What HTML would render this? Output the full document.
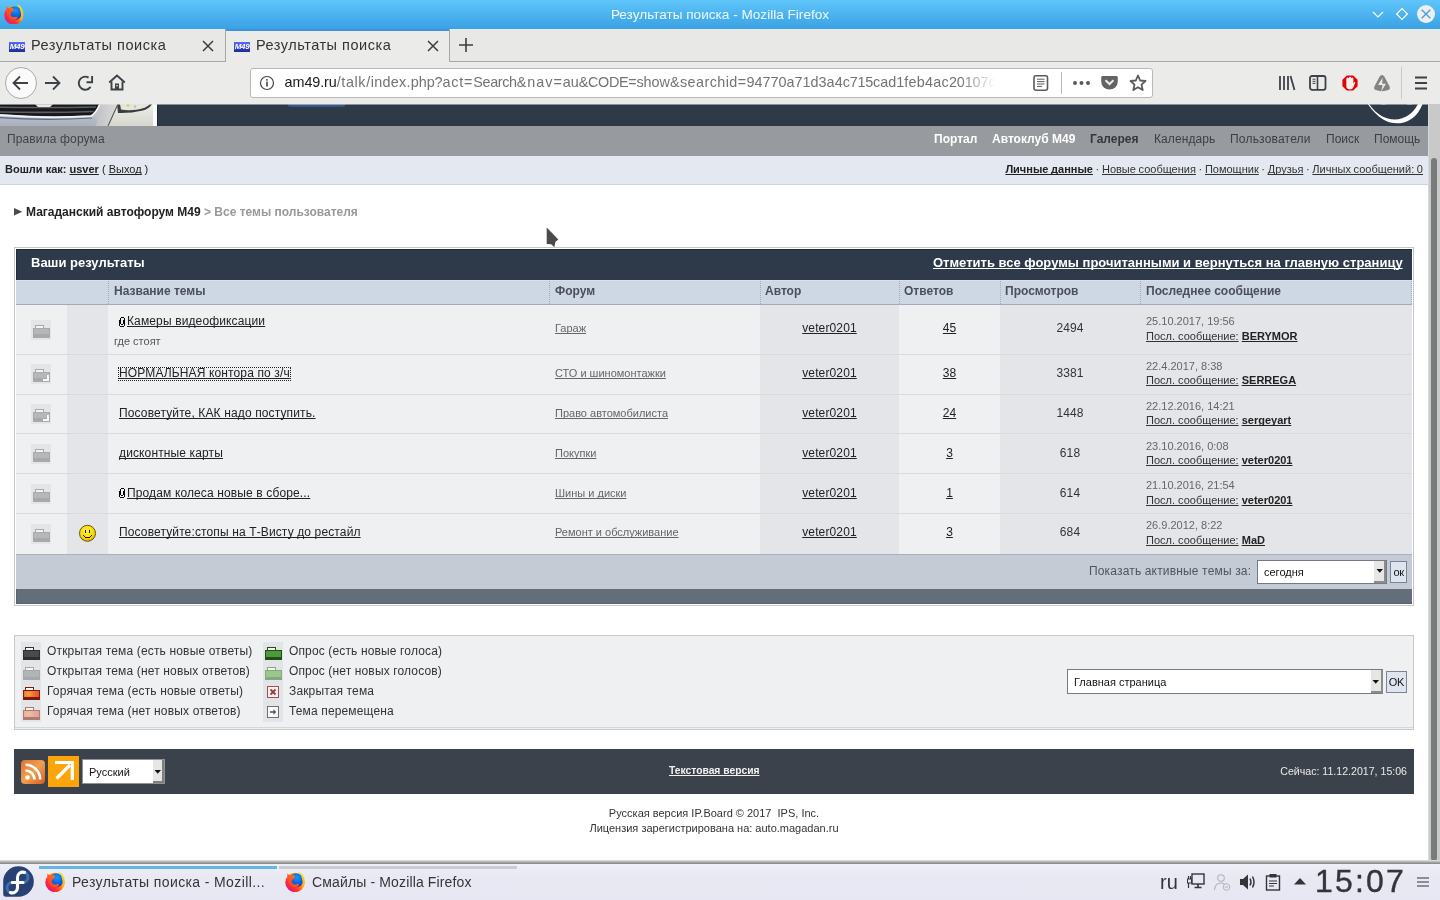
<!DOCTYPE html>
<html><head><meta charset="utf-8">
<style>
*{margin:0;padding:0;box-sizing:border-box}
html,body{width:1440px;height:900px;overflow:hidden;background:#fff;font-family:"Liberation Sans",sans-serif;position:relative}
.a{position:absolute}
.t{position:absolute;white-space:nowrap;line-height:14px}
#root{position:absolute;left:0;top:0;width:1440px;height:900px;will-change:transform}
a{color:inherit}
u{text-decoration:underline;text-decoration-skip-ink:none}
#title{left:0;top:0;width:1440px;height:29px;background:linear-gradient(#5fc5fa,#3aa1e4)}
#tabs{left:0;top:29px;width:1440px;height:33px;background:#e8e8e7;border-bottom:1px solid #a7a7a7}
#nav{left:0;top:62px;width:1440px;height:42px;background:#ebebea}
#scroll{left:1428px;top:104px;width:12px;height:756px;background:#c8c9c8;border-left:1px solid #d8d8d8}
#thumb{left:1431px;top:158px;width:6px;height:703px;background:#777b7b;border-radius:3px}
#taskbar{left:0;top:864px;width:1440px;height:36px;background:linear-gradient(#efeff7,#e9e9f4 30%,#e7e7f3)}
.fav{width:16px;height:10px;background:linear-gradient(#5a6cf0,#1c2a9c);color:#fff;font:italic bold 8px/10px "Liberation Sans",sans-serif;text-align:center;letter-spacing:-0.3px}
.ct{font-family:"Liberation Sans",sans-serif;color:#3b3f44}
</style></head><body><div id="root">
<!-- ===== TITLE BAR ===== -->
<div id="title" class="a"></div>
<div class="t" style="left:0;top:7px;width:1440px;text-align:center;color:#eef8fe;font-size:13.6px;line-height:16px">Результаты поиска - Mozilla Firefox</div>
<svg width="0" height="0" style="position:absolute"><defs>
    <linearGradient id="ffo" x1="0.1" y1="0.9" x2="0.9" y2="0.1"><stop offset="0" stop-color="#d41b8c"/><stop offset="0.3" stop-color="#ff2d2d"/><stop offset="0.62" stop-color="#ff8c0a"/><stop offset="1" stop-color="#ffe426"/></linearGradient>
    <radialGradient id="ffb" cx="0.55" cy="0.3" r="0.75"><stop offset="0" stop-color="#0a9bff"/><stop offset="0.6" stop-color="#0a5fe0"/><stop offset="1" stop-color="#3a1c9e"/></radialGradient>
    <linearGradient id="fft" x1="0" y1="0" x2="0.3" y2="1"><stop offset="0" stop-color="#ffe82a"/><stop offset="1" stop-color="#ffb30f"/></linearGradient>
    <linearGradient id="ffr" x1="0" y1="1" x2="1" y2="0"><stop offset="0" stop-color="#ff2a3a"/><stop offset="1" stop-color="#ff8a0a"/></linearGradient>
</defs></svg>
<svg class="a" style="left:4px;top:3.5px" width="19.5" height="20.5" viewBox="0 0 20 21">
  <circle cx="10" cy="11.5" r="9.7" fill="url(#ffo)"/>
  <circle cx="11.2" cy="9.3" r="7" fill="url(#ffb)"/>
  <path d="M13.3 0.3 Q20.2 3.5 19.8 11.5 Q19.5 16 16.5 18.5 Q18 13 17.6 10 Q17.2 5 13.3 0.3Z" fill="url(#fft)"/>
  <path d="M2.4 2.6 L4.4 4.3 Q7 3 9.6 4.6 L10 7.2 Q8.2 7.6 7.4 8.4 Q6.2 10.5 7.5 12.2 Q9 14 11.8 13.2 Q13.5 12.8 14.2 14 Q12.5 16.5 9.2 16.4 Q4.5 15.8 2.8 11 Q2 6 2.4 2.6Z" fill="url(#ffr)"/>
</svg>
<svg class="a" style="left:1370px;top:8px" width="16" height="12"><path d="M3 4 L8 9 L13 4" fill="none" stroke="#fff" stroke-width="1.2"/></svg>
<svg class="a" style="left:1395px;top:7px" width="14" height="14"><path d="M7 1.6 L12.4 7 L7 12.4 L1.6 7Z" fill="none" stroke="#fff" stroke-width="1.2"/></svg>
<svg class="a" style="left:1416px;top:4px" width="20" height="20"><circle cx="10" cy="10" r="9" fill="#eeeeee"/><path d="M5.7 5.7 L14.3 14.3 M14.3 5.7 L5.7 14.3" stroke="#3a9fe5" stroke-width="1.3"/></svg>

<!-- ===== TABS ===== -->
<div id="tabs" class="a"></div>
<div class="a" style="left:0;top:29px;width:226px;height:32px;border-right:1px solid #a7a7a7;background:#e8e8e7"></div>
<div class="a" style="left:226px;top:29px;width:223px;height:33px;background:#ebebea"></div>
<div class="a" style="left:226px;top:29px;width:223px;height:2px;background:#3e91de"></div>
<div class="a" style="left:449px;top:29px;width:1px;height:32px;background:#a7a7a7"></div>
<div class="a fav" style="left:9px;top:42px">M49</div>
<div class="t" style="left:31px;top:37px;font-size:14.5px;line-height:16px;color:#333;letter-spacing:0.52px">Результаты поиска</div>
<svg class="a" style="left:202px;top:40px" width="12" height="12"><path d="M1 1 L11 11 M11 1 L1 11" stroke="#3d3d3d" stroke-width="1.5"/></svg>
<div class="a fav" style="left:234px;top:42px">M49</div>
<div class="t" style="left:256px;top:37px;font-size:14.5px;line-height:16px;color:#333;letter-spacing:0.52px">Результаты поиска</div>
<svg class="a" style="left:427px;top:40px" width="12" height="12"><path d="M1 1 L11 11 M11 1 L1 11" stroke="#3d3d3d" stroke-width="1.5"/></svg>
<svg class="a" style="left:458px;top:37px" width="16" height="16"><path d="M8 1 V15 M1 8 H15" stroke="#3d3d3d" stroke-width="1.6"/></svg>

<!-- ===== NAV BAR ===== -->
<div id="nav" class="a"></div>
<div class="a" style="left:5px;top:67px;width:32px;height:32px;border-radius:50%;background:#fafafa;border:1px solid #a9a9a9"></div>
<svg class="a" style="left:11px;top:74px" width="20" height="18"><path d="M2.5 9 H17 M9 2.5 L2.5 9 L9 15.5" fill="none" stroke="#3d4247" stroke-width="1.8"/></svg>
<svg class="a" style="left:43px;top:74px" width="20" height="18"><path d="M2 9 H16.5 M10 2.5 L16.5 9 L10 15.5" fill="none" stroke="#3d4247" stroke-width="1.8"/></svg>
<svg class="a" style="left:76px;top:74px" width="19" height="18"><path d="M12.6 3.6 A 6.5 6.5 0 1 0 14.6 12.9" fill="none" stroke="#3d4247" stroke-width="1.9"/><path d="M16.1 2 V8.2 H10.5" fill="none" stroke="#3d4247" stroke-width="1.9"/></svg>
<svg class="a" style="left:108px;top:74px" width="18" height="18"><path d="M1.2 8.5 L9 1.5 L16.8 8.5" fill="none" stroke="#3d4247" stroke-width="1.9"/><path d="M3.5 7.5 V15.5 H14.5 V7.5" fill="none" stroke="#3d4247" stroke-width="1.9"/><rect x="7" y="9.5" width="4" height="6" fill="#3d4247"/><rect x="8.3" y="11" width="1.4" height="1.4" fill="#ebebea"/></svg>
<!-- url bar -->
<div class="a" style="left:250px;top:68px;width:903px;height:30px;background:#fff;border:1px solid #b8b8b8;border-radius:3px"></div>
<svg class="a" style="left:259px;top:75px" width="16" height="16"><circle cx="8" cy="8" r="6.5" fill="none" stroke="#454545" stroke-width="1.2"/><rect x="7.2" y="6.6" width="1.6" height="5" fill="#454545"/><rect x="7.2" y="4.1" width="1.6" height="1.6" fill="#454545"/></svg>
<div class="a" style="left:251px;top:69px;width:749px;height:28px;overflow:hidden"><span class="t" style="left:33.6px;top:5px;font-size:14.4px;line-height:17px;color:#1a1a1a;letter-spacing:-0.10px">am49.ru</span><span class="t" style="left:85.7px;top:5px;font-size:14.4px;line-height:17px;color:#737373;letter-spacing:0.62px">/talk/</span><span class="t" style="left:119.8px;top:5px;font-size:14.4px;line-height:17px;color:#737373;letter-spacing:0.27px">index.</span><span class="t" style="left:159.8px;top:5px;font-size:14.4px;line-height:17px;color:#737373;letter-spacing:-0.08px">php?</span><span class="t" style="left:191.5px;top:5px;font-size:14.4px;line-height:17px;color:#737373;letter-spacing:0.80px">act=</span><span class="t" style="left:222.3px;top:5px;font-size:14.4px;line-height:17px;color:#737373;letter-spacing:-0.37px">Search</span><span class="t" style="left:265.7px;top:5px;font-size:14.4px;line-height:17px;color:#737373;letter-spacing:0.98px">&amp;nav=</span><span class="t" style="left:311.8px;top:5px;font-size:14.4px;line-height:17px;color:#737373;letter-spacing:-0.06px">au</span><span class="t" style="left:327.7px;top:5px;font-size:14.4px;line-height:17px;color:#737373;letter-spacing:-0.32px">&amp;CODE=</span><span class="t" style="left:385.4px;top:5px;font-size:14.4px;line-height:17px;color:#737373;letter-spacing:-0.00px">show</span><span class="t" style="left:419.0px;top:5px;font-size:14.4px;line-height:17px;color:#737373;letter-spacing:0.41px">&amp;searchid=</span><span class="t" style="left:495.5px;top:5px;font-size:14.4px;line-height:17px;color:#737373;letter-spacing:-0.03px">94770</span><span class="t" style="left:535.4px;top:5px;font-size:14.4px;line-height:17px;color:#737373;letter-spacing:0.04px">a71d3a4</span><span class="t" style="left:591.7px;top:5px;font-size:14.4px;line-height:17px;color:#737373;letter-spacing:-0.20px">c715</span><span class="t" style="left:622.1px;top:5px;font-size:14.4px;line-height:17px;color:#737373;letter-spacing:-0.03px">cad1</span><span class="t" style="left:653.2px;top:5px;font-size:14.4px;line-height:17px;color:#737373;letter-spacing:0.25px">feb4ac</span><span class="t" style="left:697.9px;top:5px;font-size:14.4px;line-height:17px;color:#737373;letter-spacing:-0.13px">20107</span><span class="t" style="left:737.3px;top:5px;font-size:14.4px;line-height:17px;color:#737373;letter-spacing:0.25px">cd</span></div>
<div class="a" style="left:960px;top:70px;width:42px;height:26px;background:linear-gradient(90deg,rgba(255,255,255,0),#fff 85%)"></div>
<svg class="a" style="left:1033px;top:75px" width="16" height="16"><rect x="1" y="0.8" width="13.5" height="14.4" rx="1.6" fill="none" stroke="#5a5a5a" stroke-width="1.6"/><path d="M4 4.2 H11.5 M4 6.6 H11.5 M4 9 H11.5 M4 11.4 H9" stroke="#5a5a5a" stroke-width="1"/></svg>
<div class="a" style="left:1061px;top:72px;width:1px;height:22px;background:#b8b8b8"></div>
<svg class="a" style="left:1072px;top:78px" width="20" height="10"><circle cx="3" cy="5" r="2" fill="#5a5a5a"/><circle cx="9.5" cy="5" r="2" fill="#5a5a5a"/><circle cx="16" cy="5" r="2" fill="#5a5a5a"/></svg>
<svg class="a" style="left:1101px;top:75px" width="18" height="16"><path d="M1.5 1 H15.5 Q16.8 1 16.8 2.5 V6.5 A 8.3 8 0 0 1 0.2 6.5 V2.5 Q0.2 1 1.5 1Z" fill="#646464"/><path d="M4.5 5.2 L8.5 9 L12.5 5.2" fill="none" stroke="#ebebea" stroke-width="2"/></svg>
<svg class="a" style="left:1129px;top:74px" width="18" height="18"><path d="M9 1.5 L11.2 6.5 L16.5 7 L12.5 10.6 L13.7 16 L9 13.2 L4.3 16 L5.5 10.6 L1.5 7 L6.8 6.5Z" fill="none" stroke="#5a5a5a" stroke-width="1.8" stroke-linejoin="round"/></svg>
<!-- right icons -->
<svg class="a" style="left:1278px;top:75px" width="18" height="16"><path d="M2 1 V15 M6 1 V15 M10 1 V15 M12.5 1 L16.5 15" stroke="#3d4247" stroke-width="1.8"/></svg>
<svg class="a" style="left:1309px;top:75px" width="18" height="16"><rect x="1" y="1" width="15.5" height="13.8" rx="2" fill="none" stroke="#3d4247" stroke-width="1.8"/><path d="M8.5 1 V15" stroke="#3d4247" stroke-width="1.6"/><path d="M3.5 4.2 H6.5 M3.5 6.3 H6.5 M3.5 8.4 H6.5" stroke="#3d4247" stroke-width="1"/></svg>
<svg class="a" style="left:1342px;top:75px" width="16" height="16"><path d="M4.8 0.4 H11.2 L15.6 4.8 V11.2 L11.2 15.6 H4.8 L0.4 11.2 V4.8Z" fill="#e60000"/><path d="M4.3 9.5 V4.2 Q4.3 2.6 5.6 2.6 Q6.4 2.6 6.6 3.4 Q6.9 1.8 8 1.8 Q9.2 1.8 9.3 3 Q9.7 2.4 10.4 2.5 Q11.4 2.7 11.4 3.8 V8.5 L12.2 7.2 Q13 6.5 13.4 7.3 L11.2 12.8 Q10.2 14.4 7.8 14.4 Q4.3 14.2 4.3 11Z" fill="#f0f0f0"/></svg>
<svg class="a" style="left:1373px;top:74px" width="18" height="18"><path d="M9 1 Q10.4 1 11.3 2.6 L16.6 12.6 Q17.6 15.2 15.2 16 Q12 16.8 9.6 17.2 L9 16.4 L8.4 17.2 Q6 16.8 2.8 16 Q0.4 15.2 1.4 12.6 L6.7 2.6 Q7.6 1 9 1Z" fill="#838383"/><path d="M9.6 3.8 L5 11 H9.6 L8.2 17.5 L13 9.8 H9.2Z" fill="#ebebea"/></svg>
<div class="a" style="left:1401px;top:67px;width:1px;height:32px;background:#c9c9c9"></div>
<svg class="a" style="left:1414px;top:75px" width="14" height="16"><path d="M1 2.6 H13 M1 8 H13 M1 13.4 H13" stroke="#3d4247" stroke-width="2"/></svg>

<!-- ===== PAGE ===== -->
<div id="page"></div>
<!-- banner -->
<svg class="a" style="left:0;top:104px" width="158" height="22" viewBox="0 0 158 22">
  <defs>
    <linearGradient id="bmp" x1="0" y1="0" x2="0" y2="1"><stop offset="0" stop-color="#c6cbd4"/><stop offset="1" stop-color="#aab1be"/></linearGradient>
    <linearGradient id="bod" x1="0" y1="0" x2="0" y2="1"><stop offset="0" stop-color="#eeeeea"/><stop offset="1" stop-color="#d6d6ce"/></linearGradient>
    <linearGradient id="bod2" x1="0" y1="0" x2="1" y2="0"><stop offset="0" stop-color="#b9bcc4"/><stop offset="1" stop-color="#dcdcd6"/></linearGradient>
  </defs>
  <rect x="0" y="0" width="158" height="22" fill="url(#bmp)"/>
  <path d="M92 0 H118 L108 22 H95 Q100 14 92 12Z" fill="url(#bod2)"/>
  <path d="M118 0 H153 V22 H108Z" fill="url(#bod)"/>
  <path d="M0 0 H99 Q96 9 90 11.5 Q45 13.5 0 10Z" fill="#17181b"/>
  <path d="M0 3.2 Q50 4 96 3" stroke="#5c5f64" stroke-width="1.6" fill="none"/>
  <path d="M0 8 Q50 9 93.5 7.5" stroke="#5a5d62" stroke-width="1.6" fill="none"/>
  <path d="M0 11.2 Q45 14.8 91 12.2 Q96 9 99.5 1" stroke="#f2f3f5" stroke-width="1.8" fill="none"/>
  <path d="M0 13.6 Q45 17 92 14" stroke="#5d6a85" stroke-width="1.2" fill="none"/>
  <path d="M35 0.3 H53 L50 3 H38Z" fill="#e8e8e8"/>
  <path d="M117 0 H152 Q150 4 143 6.5 Q130 9.5 118 9Z" fill="#3a3e3a"/>
  <path d="M120 0 H150 Q147 3.5 138 5.5 Q128 6.8 121 5.5Z" fill="#e4e6dc"/>
  <circle cx="128" cy="1.2" r="1.3" fill="#e8c820"/>
  <circle cx="135" cy="2.5" r="1.2" fill="#b8c0b0"/>
  <path d="M118 0 L108 22" stroke="#55575a" stroke-width="1.1"/>
  <rect x="153" y="0" width="5" height="22" fill="#fbfbfb"/>
</svg>
<div class="a" style="left:157px;top:104px;width:1271px;height:22px;background:#2e3a48;border-top:1px solid #232d3c;border-left:1px solid #1e2736"></div>
<div class="a" style="left:288px;top:104px;width:57px;height:3px;background:#385684;border-radius:0 0 2px 2px"></div>
<svg class="a" style="left:1360px;top:104px" width="68" height="22" viewBox="0 0 68 22">
  <path d="M7.8 0 Q22 21 40 19.2 Q56 17 62.5 0 H58 Q50 15 35 15.5 Q20 15.5 9 0Z" fill="#fff"/>
  <rect x="21" y="0" width="5" height="1" fill="#6b7480"/><rect x="47" y="0" width="5" height="1" fill="#6b7480"/>
</svg>
<div class="a" style="left:0;top:104px;width:1428px;height:1px;background:rgba(228,228,225,0.55)"></div>
<!-- main nav bar -->
<div class="a" style="left:0;top:126px;width:1428px;height:30px;background:#979a9f"></div>
<div class="t" style="left:7px;top:132px;font-size:12px;color:#3f444b;letter-spacing:0.13px">Правила форума</div>
<div class="t" style="left:934px;top:132px;font-size:12px;font-weight:bold;color:#fff">Портал</div>
<div class="t" style="left:992px;top:132px;font-size:12px;font-weight:bold;color:#fff">Автоклуб М49</div>
<div class="t" style="left:1090px;top:132px;font-size:12px;font-weight:bold;color:#33383f">Галерея</div>
<div class="t" style="left:1154px;top:132px;font-size:12px;color:#3b4047;letter-spacing:0.1px">Календарь</div>
<div class="t" style="left:1230px;top:132px;font-size:12px;color:#3b4047;letter-spacing:0.2px">Пользователи</div>
<div class="t" style="left:1326px;top:132px;font-size:12px;color:#3b4047">Поиск</div>
<div class="t" style="left:1374px;top:132px;font-size:12px;color:#3b4047">Помощь</div>
<!-- user bar -->
<div class="a" style="left:0;top:156px;width:1428px;height:29px;background:#e4e8f0;border-bottom:1px solid #cfd5de"></div>
<div class="t" style="left:5px;top:162px;font-size:11px;color:#222"><b>Вошли как:</b> <b><u>usver</u></b> ( <u>Выход</u> )</div>
<div class="t" style="left:900px;width:523px;text-align:right;top:162px;font-size:11px;color:#333;word-spacing:-0.4px"><b><u style="color:#222">Личные данные</u></b> · <u>Новые сообщения</u> · <u>Помощник</u> · <u>Друзья</u> · <u>Личных сообщений: 0</u></div>
<!-- breadcrumb -->
<svg class="a" style="left:14px;top:207.5px" width="9" height="8"><path d="M0 0 L8.3 3.8 L0 7.6Z" fill="#4a4a4a"/></svg>
<div class="t" style="left:26px;top:205px;font-size:12px;font-weight:bold;color:#222">Магаданский автофорум М49 <span style="color:#999">&gt; Все темы пользователя</span></div>
<!-- mouse cursor -->
<svg class="a" style="left:544px;top:225px" width="17" height="25"><path d="M2.7 2.5 L2.7 19 L7.2 19.3 L10.4 22.2 L11.3 17 L14.3 14.6Z" fill="#4a4a4a" stroke="#fff" stroke-width="2" stroke-linejoin="round" paint-order="stroke"/></svg>

<!-- TABLE -->
<div class="a" style="left:14px;top:247px;width:1400px;height:359px;border:1px solid #c6c6c6;background:#fff"></div>
<div class="a" style="left:16px;top:249px;width:1396px;height:31px;background:#2e3a49;border-left:1px solid #1f2b3b;border-top:1px solid #1f2b3b"></div>
<div class="t" style="left:31px;top:255.5px;font-size:13px;font-weight:bold;color:#fff">Ваши результаты</div>
<div class="t" style="left:933px;top:255.5px;font-size:13px;font-weight:bold;color:#fff"><u>Отметить все форумы прочитанными и вернуться на главную страницу</u></div>
<div class="a" style="left:16px;top:280px;width:1396px;height:25px;background:#ced7e4;border-top:1px solid #d9e0ea;border-bottom:1px solid #a2abb8"></div>
<div class="a" style="left:108px;top:281px;width:1px;height:23px;border-left:1px dotted #a3acb9"></div>
<div class="a" style="left:549px;top:281px;width:1px;height:23px;border-left:1px dotted #a3acb9"></div>
<div class="a" style="left:760px;top:281px;width:1px;height:23px;border-left:1px dotted #a3acb9"></div>
<div class="a" style="left:899px;top:281px;width:1px;height:23px;border-left:1px dotted #a3acb9"></div>
<div class="a" style="left:1000px;top:281px;width:1px;height:23px;border-left:1px dotted #a3acb9"></div>
<div class="a" style="left:1140px;top:281px;width:1px;height:23px;border-left:1px dotted #a3acb9"></div>
<div class="a" style="left:1411px;top:281px;width:1px;height:23px;border-left:1px dotted #a3acb9"></div>
<div class="t" style="left:114px;top:284px;font-size:12px;font-weight:bold;color:#4a505a">Название темы</div>
<div class="t" style="left:555px;top:284px;font-size:12px;font-weight:bold;color:#4a505a">Форум</div>
<div class="t" style="left:765px;top:284px;font-size:12px;font-weight:bold;color:#4a505a">Автор</div>
<div class="t" style="left:904px;top:284px;font-size:12px;font-weight:bold;color:#4a505a">Ответов</div>
<div class="t" style="left:1005px;top:284px;font-size:12px;font-weight:bold;color:#4a505a">Просмотров</div>
<div class="t" style="left:1146px;top:284px;font-size:12px;font-weight:bold;color:#4a505a">Последнее сообщение</div>
<div class="a" style="left:16px;top:305px;width:51px;height:49px;background:#eff0f2"></div>
<div class="a" style="left:67px;top:305px;width:41px;height:49px;background:#e4e5e9"></div>
<div class="a" style="left:108px;top:305px;width:441px;height:49px;background:#eff0f2"></div>
<div class="a" style="left:549px;top:305px;width:211px;height:49px;background:#eff0f2"></div>
<div class="a" style="left:760px;top:305px;width:139px;height:49px;background:#e4e5e9"></div>
<div class="a" style="left:899px;top:305px;width:101px;height:49px;background:#eff0f2"></div>
<div class="a" style="left:1000px;top:305px;width:140px;height:49px;background:#e4e5e9"></div>
<div class="a" style="left:1140px;top:305px;width:272px;height:49px;background:#e4e5e9"></div>
<div class="a" style="left:16px;top:355px;width:51px;height:39px;background:#eff0f2"></div>
<div class="a" style="left:67px;top:355px;width:41px;height:39px;background:#e4e5e9"></div>
<div class="a" style="left:108px;top:355px;width:441px;height:39px;background:#eff0f2"></div>
<div class="a" style="left:549px;top:355px;width:211px;height:39px;background:#eff0f2"></div>
<div class="a" style="left:760px;top:355px;width:139px;height:39px;background:#e4e5e9"></div>
<div class="a" style="left:899px;top:355px;width:101px;height:39px;background:#eff0f2"></div>
<div class="a" style="left:1000px;top:355px;width:140px;height:39px;background:#e4e5e9"></div>
<div class="a" style="left:1140px;top:355px;width:272px;height:39px;background:#e4e5e9"></div>
<div class="a" style="left:16px;top:395px;width:51px;height:38px;background:#eff0f2"></div>
<div class="a" style="left:67px;top:395px;width:41px;height:38px;background:#e4e5e9"></div>
<div class="a" style="left:108px;top:395px;width:441px;height:38px;background:#eff0f2"></div>
<div class="a" style="left:549px;top:395px;width:211px;height:38px;background:#eff0f2"></div>
<div class="a" style="left:760px;top:395px;width:139px;height:38px;background:#e4e5e9"></div>
<div class="a" style="left:899px;top:395px;width:101px;height:38px;background:#eff0f2"></div>
<div class="a" style="left:1000px;top:395px;width:140px;height:38px;background:#e4e5e9"></div>
<div class="a" style="left:1140px;top:395px;width:272px;height:38px;background:#e4e5e9"></div>
<div class="a" style="left:16px;top:434px;width:51px;height:39px;background:#eff0f2"></div>
<div class="a" style="left:67px;top:434px;width:41px;height:39px;background:#e4e5e9"></div>
<div class="a" style="left:108px;top:434px;width:441px;height:39px;background:#eff0f2"></div>
<div class="a" style="left:549px;top:434px;width:211px;height:39px;background:#eff0f2"></div>
<div class="a" style="left:760px;top:434px;width:139px;height:39px;background:#e4e5e9"></div>
<div class="a" style="left:899px;top:434px;width:101px;height:39px;background:#eff0f2"></div>
<div class="a" style="left:1000px;top:434px;width:140px;height:39px;background:#e4e5e9"></div>
<div class="a" style="left:1140px;top:434px;width:272px;height:39px;background:#e4e5e9"></div>
<div class="a" style="left:16px;top:474px;width:51px;height:39px;background:#eff0f2"></div>
<div class="a" style="left:67px;top:474px;width:41px;height:39px;background:#e4e5e9"></div>
<div class="a" style="left:108px;top:474px;width:441px;height:39px;background:#eff0f2"></div>
<div class="a" style="left:549px;top:474px;width:211px;height:39px;background:#eff0f2"></div>
<div class="a" style="left:760px;top:474px;width:139px;height:39px;background:#e4e5e9"></div>
<div class="a" style="left:899px;top:474px;width:101px;height:39px;background:#eff0f2"></div>
<div class="a" style="left:1000px;top:474px;width:140px;height:39px;background:#e4e5e9"></div>
<div class="a" style="left:1140px;top:474px;width:272px;height:39px;background:#e4e5e9"></div>
<div class="a" style="left:16px;top:514px;width:51px;height:40px;background:#eff0f2"></div>
<div class="a" style="left:67px;top:514px;width:41px;height:40px;background:#e4e5e9"></div>
<div class="a" style="left:108px;top:514px;width:441px;height:40px;background:#eff0f2"></div>
<div class="a" style="left:549px;top:514px;width:211px;height:40px;background:#eff0f2"></div>
<div class="a" style="left:760px;top:514px;width:139px;height:40px;background:#e4e5e9"></div>
<div class="a" style="left:899px;top:514px;width:101px;height:40px;background:#eff0f2"></div>
<div class="a" style="left:1000px;top:514px;width:140px;height:40px;background:#e4e5e9"></div>
<div class="a" style="left:1140px;top:514px;width:272px;height:40px;background:#e4e5e9"></div>
<div class="a" style="left:16px;top:354px;width:1396px;height:1px;background:#d9dadc"></div>
<div class="a" style="left:16px;top:394px;width:1396px;height:1px;background:#d9dadc"></div>
<div class="a" style="left:16px;top:433px;width:1396px;height:1px;background:#d9dadc"></div>
<div class="a" style="left:16px;top:473px;width:1396px;height:1px;background:#d9dadc"></div>
<div class="a" style="left:16px;top:513px;width:1396px;height:1px;background:#d9dadc"></div>
<div class="a" style="left:16px;top:554px;width:1396px;height:1px;background:#a9b1bd"></div>
<div class="a" style="left:16px;top:555px;width:1396px;height:34px;background:#c4cbd4"></div>
<div class="a" style="left:16px;top:589px;width:1396px;height:15px;background:#646e7b;border-bottom:1px solid #59636f;border-left:1px solid #59636f"></div>
<div class="t" style="left:1089px;top:564px;font-size:12px;color:#4e5560;letter-spacing:0.16px">Показать активные темы за:</div>
<div class="a" style="left:1257px;top:560px;width:130px;height:24px;background:#fff;border:1px solid #737b88"></div>
<div class="t" style="left:1264px;top:565px;font-size:11px;color:#111">сегодня</div>
<div class="a" style="left:1374px;top:561px;width:12px;height:22px;background:#e6e6e4;border-right:2px solid #8c8c8c;border-bottom:2px solid #8c8c8c"></div>
<svg class="a" style="left:1376px;top:568px" width="8" height="6"><path d="M0.5 1 H7 L3.75 4.8Z" fill="#111"/></svg>
<div class="a" style="left:1390px;top:561px;width:17px;height:22px;background:#dfe5ef;border:1px solid #7c8594"></div>
<div class="t" style="left:1391px;top:565px;width:15px;text-align:center;font-size:11px;color:#111;letter-spacing:-0.5px">ок</div>
<div class="a" style="left:31px;top:320px;width:20px;height:20px;background:#e4e5e8"></div><div class="a" style="left:35px;top:325px;width:9px;height:4px;border:1px solid #a8a8a9;background:#f4f4f4"></div><div class="a" style="left:33px;top:328px;width:17px;height:10px;border:1px solid #a9a9aa;background:linear-gradient(#b6b7b9 0,#b6b7b9 65%,#a8a9ab 65%)"></div>
<svg class="a" style="left:118px;top:316px" width="8" height="12" shape-rendering="crispEdges" fill="#000"><rect x="3" y="1" width="1" height="1"/><rect x="4" y="1" width="1" height="1"/><rect x="5" y="1" width="1" height="1"/><rect x="2" y="2" width="1" height="1"/><rect x="6" y="2" width="1" height="1"/><rect x="2" y="3" width="1" height="1"/><rect x="6" y="3" width="1" height="1"/><rect x="1" y="4" width="1" height="1"/><rect x="2" y="4" width="1" height="1"/><rect x="5" y="4" width="1" height="1"/><rect x="6" y="4" width="1" height="1"/><rect x="1" y="5" width="1" height="1"/><rect x="2" y="5" width="1" height="1"/><rect x="5" y="5" width="1" height="1"/><rect x="6" y="5" width="1" height="1"/><rect x="1" y="6" width="1" height="1"/><rect x="2" y="6" width="1" height="1"/><rect x="5" y="6" width="1" height="1"/><rect x="6" y="6" width="1" height="1"/><rect x="1" y="7" width="1" height="1"/><rect x="2" y="7" width="1" height="1"/><rect x="5" y="7" width="1" height="1"/><rect x="6" y="7" width="1" height="1"/><rect x="1" y="8" width="1" height="1"/><rect x="3" y="8" width="1" height="1"/><rect x="4" y="8" width="1" height="1"/><rect x="6" y="8" width="1" height="1"/><rect x="1" y="9" width="1" height="1"/><rect x="6" y="9" width="1" height="1"/><rect x="2" y="10" width="1" height="1"/><rect x="3" y="10" width="1" height="1"/><rect x="4" y="10" width="1" height="1"/><rect x="5" y="10" width="1" height="1"/></svg>
<div class="t" style="left:127px;top:314px;font-size:12px;color:#222;letter-spacing:0.13px"><u>Камеры видеофиксации</u></div>
<div class="t" style="left:114px;top:334px;font-size:11px;color:#555">где стоят</div>
<div class="t" style="left:555px;top:321px;font-size:11px;color:#666"><u>Гараж</u></div>
<div class="t" style="left:760px;top:321px;width:139px;text-align:center;font-size:12px;color:#222;letter-spacing:0.13px"><u>veter0201</u></div>
<div class="t" style="left:899px;top:321px;width:101px;text-align:center;font-size:12px;color:#222"><u>45</u></div>
<div class="t" style="left:1000px;top:321px;width:140px;text-align:center;font-size:12px;color:#333;letter-spacing:0.13px">2494</div>
<div class="t" style="left:1146px;top:314px;font-size:11px;color:#666">25.10.2017, 19:56</div>
<div class="t" style="left:1146px;top:329px;font-size:11px;color:#333"><u>Посл. сообщение:</u> <b style="color:#222"><u>BERYMOR</u></b></div>
<div class="a" style="left:31px;top:364px;width:20px;height:20px;background:#e4e5e8"></div><div class="a" style="left:35px;top:369px;width:9px;height:4px;border:1px solid #a8a8a9;background:#f4f4f4"></div><div class="a" style="left:33px;top:372px;width:17px;height:10px;border:1px solid #a9a9aa;background:linear-gradient(#b6b7b9 0,#b6b7b9 65%,#a8a9ab 65%)"></div><div class="a" style="left:43px;top:375px;width:6px;height:6px;border-right:2px solid #f6f6f6;border-bottom:2px solid #f6f6f6"></div>
<div class="a" style="left:118px;top:367px;width:173px;height:14px;border:1px dotted #222"></div>
<div class="t" style="left:119px;top:366px;font-size:12px;color:#222;letter-spacing:0.13px"><u>НОРМАЛЬНАЯ контора по з/ч</u></div>
<div class="t" style="left:555px;top:366px;font-size:11px;color:#666"><u>СТО и шиномонтажки</u></div>
<div class="t" style="left:760px;top:366px;width:139px;text-align:center;font-size:12px;color:#222;letter-spacing:0.13px"><u>veter0201</u></div>
<div class="t" style="left:899px;top:366px;width:101px;text-align:center;font-size:12px;color:#222"><u>38</u></div>
<div class="t" style="left:1000px;top:366px;width:140px;text-align:center;font-size:12px;color:#333;letter-spacing:0.13px">3381</div>
<div class="t" style="left:1146px;top:359px;font-size:11px;color:#666">22.4.2017, 8:38</div>
<div class="t" style="left:1146px;top:373px;font-size:11px;color:#333"><u>Посл. сообщение:</u> <b style="color:#222"><u>SERREGA</u></b></div>
<div class="a" style="left:31px;top:404px;width:20px;height:20px;background:#e4e5e8"></div><div class="a" style="left:35px;top:409px;width:9px;height:4px;border:1px solid #a8a8a9;background:#f4f4f4"></div><div class="a" style="left:33px;top:412px;width:17px;height:10px;border:1px solid #a9a9aa;background:linear-gradient(#b6b7b9 0,#b6b7b9 65%,#a8a9ab 65%)"></div><div class="a" style="left:43px;top:415px;width:6px;height:6px;border-right:2px solid #f6f6f6;border-bottom:2px solid #f6f6f6"></div>
<div class="t" style="left:119px;top:406px;font-size:12px;color:#222;letter-spacing:0.13px"><u>Посоветуйте, КАК надо поступить.</u></div>
<div class="t" style="left:555px;top:406px;font-size:11px;color:#666"><u>Право автомобилиста</u></div>
<div class="t" style="left:760px;top:406px;width:139px;text-align:center;font-size:12px;color:#222;letter-spacing:0.13px"><u>veter0201</u></div>
<div class="t" style="left:899px;top:406px;width:101px;text-align:center;font-size:12px;color:#222"><u>24</u></div>
<div class="t" style="left:1000px;top:406px;width:140px;text-align:center;font-size:12px;color:#333;letter-spacing:0.13px">1448</div>
<div class="t" style="left:1146px;top:399px;font-size:11px;color:#666">22.12.2016, 14:21</div>
<div class="t" style="left:1146px;top:413px;font-size:11px;color:#333"><u>Посл. сообщение:</u> <b style="color:#222"><u>sergeyart</u></b></div>
<div class="a" style="left:31px;top:444px;width:20px;height:20px;background:#e4e5e8"></div><div class="a" style="left:35px;top:449px;width:9px;height:4px;border:1px solid #a8a8a9;background:#f4f4f4"></div><div class="a" style="left:33px;top:452px;width:17px;height:10px;border:1px solid #a9a9aa;background:linear-gradient(#b6b7b9 0,#b6b7b9 65%,#a8a9ab 65%)"></div>
<div class="t" style="left:119px;top:446px;font-size:12px;color:#222;letter-spacing:0.13px"><u>дисконтные карты</u></div>
<div class="t" style="left:555px;top:446px;font-size:11px;color:#666"><u>Покупки</u></div>
<div class="t" style="left:760px;top:446px;width:139px;text-align:center;font-size:12px;color:#222;letter-spacing:0.13px"><u>veter0201</u></div>
<div class="t" style="left:899px;top:446px;width:101px;text-align:center;font-size:12px;color:#222"><u>3</u></div>
<div class="t" style="left:1000px;top:446px;width:140px;text-align:center;font-size:12px;color:#333;letter-spacing:0.13px">618</div>
<div class="t" style="left:1146px;top:439px;font-size:11px;color:#666">23.10.2016, 0:08</div>
<div class="t" style="left:1146px;top:453px;font-size:11px;color:#333"><u>Посл. сообщение:</u> <b style="color:#222"><u>veter0201</u></b></div>
<div class="a" style="left:31px;top:484px;width:20px;height:20px;background:#e4e5e8"></div><div class="a" style="left:35px;top:489px;width:9px;height:4px;border:1px solid #a8a8a9;background:#f4f4f4"></div><div class="a" style="left:33px;top:492px;width:17px;height:10px;border:1px solid #a9a9aa;background:linear-gradient(#b6b7b9 0,#b6b7b9 65%,#a8a9ab 65%)"></div>
<svg class="a" style="left:118px;top:487px" width="8" height="12" shape-rendering="crispEdges" fill="#000"><rect x="3" y="1" width="1" height="1"/><rect x="4" y="1" width="1" height="1"/><rect x="5" y="1" width="1" height="1"/><rect x="2" y="2" width="1" height="1"/><rect x="6" y="2" width="1" height="1"/><rect x="2" y="3" width="1" height="1"/><rect x="6" y="3" width="1" height="1"/><rect x="1" y="4" width="1" height="1"/><rect x="2" y="4" width="1" height="1"/><rect x="5" y="4" width="1" height="1"/><rect x="6" y="4" width="1" height="1"/><rect x="1" y="5" width="1" height="1"/><rect x="2" y="5" width="1" height="1"/><rect x="5" y="5" width="1" height="1"/><rect x="6" y="5" width="1" height="1"/><rect x="1" y="6" width="1" height="1"/><rect x="2" y="6" width="1" height="1"/><rect x="5" y="6" width="1" height="1"/><rect x="6" y="6" width="1" height="1"/><rect x="1" y="7" width="1" height="1"/><rect x="2" y="7" width="1" height="1"/><rect x="5" y="7" width="1" height="1"/><rect x="6" y="7" width="1" height="1"/><rect x="1" y="8" width="1" height="1"/><rect x="3" y="8" width="1" height="1"/><rect x="4" y="8" width="1" height="1"/><rect x="6" y="8" width="1" height="1"/><rect x="1" y="9" width="1" height="1"/><rect x="6" y="9" width="1" height="1"/><rect x="2" y="10" width="1" height="1"/><rect x="3" y="10" width="1" height="1"/><rect x="4" y="10" width="1" height="1"/><rect x="5" y="10" width="1" height="1"/></svg>
<div class="t" style="left:127px;top:486px;font-size:12px;color:#222;letter-spacing:0.13px"><u>Продам колеса новые в сборе...</u></div>
<div class="t" style="left:555px;top:486px;font-size:11px;color:#666"><u>Шины и диски</u></div>
<div class="t" style="left:760px;top:486px;width:139px;text-align:center;font-size:12px;color:#222;letter-spacing:0.13px"><u>veter0201</u></div>
<div class="t" style="left:899px;top:486px;width:101px;text-align:center;font-size:12px;color:#222"><u>1</u></div>
<div class="t" style="left:1000px;top:486px;width:140px;text-align:center;font-size:12px;color:#333;letter-spacing:0.13px">614</div>
<div class="t" style="left:1146px;top:478px;font-size:11px;color:#666">21.10.2016, 21:54</div>
<div class="t" style="left:1146px;top:493px;font-size:11px;color:#333"><u>Посл. сообщение:</u> <b style="color:#222"><u>veter0201</u></b></div>
<div class="a" style="left:31px;top:524px;width:20px;height:20px;background:#e4e5e8"></div><div class="a" style="left:35px;top:529px;width:9px;height:4px;border:1px solid #a8a8a9;background:#f4f4f4"></div><div class="a" style="left:33px;top:532px;width:17px;height:10px;border:1px solid #a9a9aa;background:linear-gradient(#b6b7b9 0,#b6b7b9 65%,#a8a9ab 65%)"></div>
<svg class="a" style="left:78px;top:524px" width="19" height="19"><defs><radialGradient id="sm" cx="0.45" cy="0.35" r="0.7"><stop offset="0" stop-color="#fff04a"/><stop offset="0.65" stop-color="#f8d800"/><stop offset="1" stop-color="#e0a800"/></radialGradient></defs><circle cx="9.5" cy="9.3" r="8" fill="url(#sm)" stroke="#5c4500" stroke-width="0.9"/><g fill="#2a2000" shape-rendering="crispEdges"><rect x="7" y="6" width="1" height="3"/><rect x="11" y="6" width="1" height="3"/><rect x="5" y="11" width="1" height="1"/><rect x="6" y="12" width="1" height="1"/><rect x="7" y="13" width="5" height="1"/><rect x="12" y="12" width="1" height="1"/><rect x="13" y="11" width="1" height="1"/></g></svg>
<div class="t" style="left:119px;top:525px;font-size:12px;color:#222;letter-spacing:0.13px"><u>Посоветуйте:стопы на Т-Висту до рестайл</u></div>
<div class="t" style="left:555px;top:525px;font-size:11px;color:#666"><u>Ремонт и обслуживание</u></div>
<div class="t" style="left:760px;top:525px;width:139px;text-align:center;font-size:12px;color:#222;letter-spacing:0.13px"><u>veter0201</u></div>
<div class="t" style="left:899px;top:525px;width:101px;text-align:center;font-size:12px;color:#222"><u>3</u></div>
<div class="t" style="left:1000px;top:525px;width:140px;text-align:center;font-size:12px;color:#333;letter-spacing:0.13px">684</div>
<div class="t" style="left:1146px;top:518px;font-size:11px;color:#666">26.9.2012, 8:22</div>
<div class="t" style="left:1146px;top:533px;font-size:11px;color:#333"><u>Посл. сообщение:</u> <b style="color:#222"><u>MaD</u></b></div>
<!-- /TABLE -->
<!-- FOOT -->
<div class="a" style="left:14px;top:635px;width:1400px;height:95px;border:1px solid #c8c8c8;background:#eff0f2"></div>
<div class="a" style="left:15px;top:727px;width:1398px;height:1px;background:#d6d7d9"></div>
<div class="a" style="left:21px;top:642px;width:20px;height:80px;background:#e3e4e7"></div>
<div class="a" style="left:263px;top:642px;width:20px;height:80px;background:#e3e4e7"></div>
<div class="a" style="left:25px;top:647px;width:9px;height:4px;border:1px solid #333;background:#f5f5f5"></div><div class="a" style="left:23px;top:650px;width:17px;height:10px;border:1px solid #2e2e2e;background:linear-gradient(#4a4a4a 0,#4a4a4a 70%,#2e2e2e 70%)"></div>
<div class="a" style="left:25px;top:667px;width:9px;height:4px;border:1px solid #a8a8a8;background:#f5f5f5"></div><div class="a" style="left:23px;top:670px;width:17px;height:10px;border:1px solid #a6a7a9;background:linear-gradient(#b3b4b6 0,#b3b4b6 70%,#a6a7a9 70%)"></div>
<div class="a" style="left:25px;top:687px;width:9px;height:4px;border:1px solid #7a1a10;background:#f5f5f5"></div><div class="a" style="left:23px;top:690px;width:17px;height:10px;border:1px solid #7a1a10;background:linear-gradient(#e4572a 0,#e4572a 70%,#7a1a10 70%)"></div>
<div class="a" style="left:24px;top:691px;width:15px;height:6px;background:radial-gradient(circle at 30% 50%,#f7a040 0,#ea6a2a 60%,#e05a24 100%)"></div>
<div class="a" style="left:25px;top:707px;width:9px;height:4px;border:1px solid #b07a74;background:#f5f5f5"></div><div class="a" style="left:23px;top:710px;width:17px;height:10px;border:1px solid #b07a74;background:linear-gradient(#e6a79a 0,#e6a79a 70%,#b07a74 70%)"></div>
<div class="a" style="left:24px;top:711px;width:15px;height:6px;background:radial-gradient(circle at 30% 50%,#f0c0a4 0,#e6aa98 60%,#e2a294 100%)"></div>
<div class="a" style="left:267px;top:647px;width:9px;height:4px;border:1px solid #1f4e17;background:#f5f5f5"></div><div class="a" style="left:265px;top:650px;width:17px;height:10px;border:1px solid #1f4e17;background:linear-gradient(#4c9a3a 0,#4c9a3a 70%,#1f4e17 70%)"></div>
<div class="a" style="left:267px;top:667px;width:9px;height:4px;border:1px solid #86a97c;background:#f5f5f5"></div><div class="a" style="left:265px;top:670px;width:17px;height:10px;border:1px solid #86a97c;background:linear-gradient(#9cc68e 0,#9cc68e 70%,#86a97c 70%)"></div>
<svg class="a" style="left:267px;top:686px" width="12" height="12"><rect x="0.5" y="0.5" width="11" height="11" fill="#f7f0f0" stroke="#a05050"/><path d="M3.5 3.5 L8.5 8.5 M8.5 3.5 L3.5 8.5" stroke="#a03a3a" stroke-width="1.8"/></svg>
<svg class="a" style="left:267px;top:706px" width="12" height="12"><rect x="0.5" y="0.5" width="11" height="11" fill="#fafafa" stroke="#707070"/><path d="M3 6 H7.5" stroke="#555" stroke-width="1.6"/><path d="M6.5 3.3 L9.2 6 L6.5 8.7Z" fill="#555"/></svg>
<div class="t" style="left:47px;top:644px;font-size:12px;color:#333;letter-spacing:0.16px">Открытая тема (есть новые ответы)</div>
<div class="t" style="left:289px;top:644px;font-size:12px;color:#333;letter-spacing:0.14px">Опрос (есть новые голоса)</div>
<div class="t" style="left:47px;top:664px;font-size:12px;color:#333;letter-spacing:0.16px">Открытая тема (нет новых ответов)</div>
<div class="t" style="left:289px;top:664px;font-size:12px;color:#333;letter-spacing:0.14px">Опрос (нет новых голосов)</div>
<div class="t" style="left:47px;top:684px;font-size:12px;color:#333;letter-spacing:0.16px">Горячая тема (есть новые ответы)</div>
<div class="t" style="left:289px;top:684px;font-size:12px;color:#333;letter-spacing:0.14px">Закрытая тема</div>
<div class="t" style="left:47px;top:704px;font-size:12px;color:#333;letter-spacing:0.16px">Горячая тема (нет новых ответов)</div>
<div class="t" style="left:289px;top:704px;font-size:12px;color:#333;letter-spacing:0.14px">Тема перемещена</div>
<div class="a" style="left:1067px;top:669px;width:316px;height:25px;background:#fff;border:1px solid #737b88"></div>
<div class="t" style="left:1074px;top:675px;font-size:11px;color:#111">Главная страница</div>
<div class="a" style="left:1371px;top:670px;width:12px;height:23px;background:#e6e6e4;border-right:2px solid #8c8c8c;border-bottom:2px solid #8c8c8c"></div>
<svg class="a" style="left:1372px;top:679px" width="8" height="6"><path d="M0.5 1 H7 L3.75 4.8Z" fill="#111"/></svg>
<div class="a" style="left:1386px;top:671px;width:21px;height:22px;background:#dfe5ef;border:1px solid #7c8594"></div>
<div class="t" style="left:1386px;top:675px;width:21px;text-align:center;font-size:11px;color:#111;letter-spacing:-0.3px">OK</div>
<div class="a" style="left:14px;top:749px;width:1400px;height:45px;background:#3c424c"></div>
<svg class="a" style="left:21px;top:760px" width="24" height="24"><defs><linearGradient id="rss" x1="0" y1="0" x2="1" y2="1"><stop offset="0" stop-color="#e2712c"/><stop offset="0.5" stop-color="#f0a050"/><stop offset="1" stop-color="#d65c20"/></linearGradient></defs><rect x="0" y="0" width="24" height="24" rx="4" fill="url(#rss)"/><circle cx="6.5" cy="17.5" r="2.3" fill="#fff"/><path d="M4.5 10.5 A 9 9 0 0 1 13.5 19.5" fill="none" stroke="#fff" stroke-width="2.6"/><path d="M4.5 4.8 A 14.7 14.7 0 0 1 19.2 19.5" fill="none" stroke="#fff" stroke-width="2.6"/></svg>
<svg class="a" style="left:48px;top:756px" width="31" height="31"><rect x="0" y="0" width="31" height="31" fill="#fca50a"/><path d="M8.5 22.5 L22 9" stroke="#fff" stroke-width="3.2"/><path d="M7 6.5 H24.3 V24" fill="none" stroke="#fff" stroke-width="3.2"/></svg>
<div class="a" style="left:82px;top:759px;width:83px;height:25px;background:#fff;border:1px solid #8d939b"></div>
<div class="t" style="left:89px;top:765px;font-size:11px;color:#111">Русский</div>
<div class="a" style="left:153px;top:760px;width:11px;height:23px;background:#e6e6e4;border-right:2px solid #7f7f7f;border-bottom:2px solid #7f7f7f"></div>
<svg class="a" style="left:154px;top:769px" width="8" height="6"><path d="M0.5 1 H7 L3.75 4.8Z" fill="#111"/></svg>
<div class="t" style="left:669px;top:763.5px;font-size:10.3px;font-weight:bold;color:#f2f2f2"><u>Текстовая версия</u></div>
<div class="t" style="left:1000px;top:763.5px;width:407px;text-align:right;font-size:10.6px;color:#e8e8e8">Сейчас: 11.12.2017, 15:06</div>
<div class="t" style="left:14px;top:806px;width:1400px;text-align:center;font-size:11px;color:#333">Русская версия IP.Board &copy; 2017&nbsp; IPS, Inc.</div>
<div class="t" style="left:14px;top:821px;width:1400px;text-align:center;font-size:11px;color:#333">Лицензия зарегистрирована на: auto.magadan.ru</div>
<!-- /FOOT -->
<!-- ===== SCROLLBAR ===== -->
<div id="scroll" class="a"></div>
<div id="thumb" class="a"></div>

<!-- ===== TASKBAR ===== -->
<div class="a" style="left:0;top:860px;width:1440px;height:4px;background:linear-gradient(#e8e8e8,#b4b4b4 45%,#8c8c8c 85%,#9a9a9a)"></div>
<div id="taskbar" class="a"></div>
<svg class="a" style="left:0;top:862px" width="38" height="38" viewBox="0 0 38 38">
  <path d="M3.2 19.5 A 15.3 15.3 0 1 1 18.5 34.8 H6 Q3.2 34.8 3.2 32Z" fill="#294172"/>
  <path d="M22.7 10.1 A 5.2 5.2 0 0 1 22.7 20.5" fill="none" stroke="#3c6eb4" stroke-width="3"/>
  <path d="M12.3 20.5 A 5.2 5.2 0 0 0 12.3 30.9" fill="none" stroke="#3c6eb4" stroke-width="3"/>
  <path d="M24.6 10.5 A 5.2 5.2 0 0 0 17.5 15.3 V25.7 A 5.2 5.2 0 0 1 10.4 30.5" fill="none" stroke="#fff" stroke-width="3.1" stroke-linecap="round"/>
  <path d="M12.3 20.5 H23" stroke="#fff" stroke-width="3.1" stroke-linecap="round"/>
</svg>
<div class="a" style="left:39px;top:866px;width:238px;height:3px;background:#64b5e8"></div>
<div class="a" style="left:279px;top:866px;width:238px;height:3px;background:#c8ccd3"></div>
<svg class="a" style="left:45px;top:871px" width="20" height="21" viewBox="0 0 20 21">
  <circle cx="10" cy="11.5" r="9.7" fill="url(#ffo)"/>
  <circle cx="11.2" cy="9.3" r="7" fill="url(#ffb)"/>
  <path d="M13.3 0.3 Q20.2 3.5 19.8 11.5 Q19.5 16 16.5 18.5 Q18 13 17.6 10 Q17.2 5 13.3 0.3Z" fill="url(#fft)"/>
  <path d="M2.4 2.6 L4.4 4.3 Q7 3 9.6 4.6 L10 7.2 Q8.2 7.6 7.4 8.4 Q6.2 10.5 7.5 12.2 Q9 14 11.8 13.2 Q13.5 12.8 14.2 14 Q12.5 16.5 9.2 16.4 Q4.5 15.8 2.8 11 Q2 6 2.4 2.6Z" fill="url(#ffr)"/>
</svg>
<div class="t" style="left:72px;top:875px;font-size:14px;line-height:15px;color:#31363b;letter-spacing:0.38px">Результаты поиска - Mozill...</div>
<svg class="a" style="left:285px;top:871px" width="20" height="21" viewBox="0 0 20 21">
  <circle cx="10" cy="11.5" r="9.7" fill="url(#ffo)"/>
  <circle cx="11.2" cy="9.3" r="7" fill="url(#ffb)"/>
  <path d="M13.3 0.3 Q20.2 3.5 19.8 11.5 Q19.5 16 16.5 18.5 Q18 13 17.6 10 Q17.2 5 13.3 0.3Z" fill="url(#fft)"/>
  <path d="M2.4 2.6 L4.4 4.3 Q7 3 9.6 4.6 L10 7.2 Q8.2 7.6 7.4 8.4 Q6.2 10.5 7.5 12.2 Q9 14 11.8 13.2 Q13.5 12.8 14.2 14 Q12.5 16.5 9.2 16.4 Q4.5 15.8 2.8 11 Q2 6 2.4 2.6Z" fill="url(#ffr)"/>
</svg>
<div class="t" style="left:312px;top:875px;font-size:14px;line-height:15px;color:#31363b;letter-spacing:0.14px">Смайлы - Mozilla Firefox</div>
<!-- tray -->
<div class="t" style="left:1160px;top:872px;font-size:20px;line-height:20px;color:#31363b">ru</div>
<svg class="a" style="left:1187px;top:873px" width="18" height="18"><rect x="5" y="1" width="12" height="10" fill="none" stroke="#31363b" stroke-width="1.4"/><path d="M11 11 V14 M7.5 14.5 H14.5" stroke="#31363b" stroke-width="1.6"/><path d="M1.5 3 V15 M3.5 3 V10" stroke="#31363b" stroke-width="1.2"/><rect x="0.5" y="6" width="4" height="4" fill="#e3e7f1" stroke="#31363b"/></svg>
<svg class="a" style="left:1213px;top:873px" width="18" height="18"><circle cx="8" cy="5" r="3.3" fill="none" stroke="#b0b4ba" stroke-width="1.1"/><path d="M1.5 17 Q2 10 8 10 Q10 10 11.5 11" fill="none" stroke="#b0b4ba" stroke-width="1.1"/><circle cx="13.5" cy="14" r="3.3" fill="none" stroke="#b0b4ba" stroke-width="1"/><path d="M11.8 14 H15.2" stroke="#b0b4ba"/></svg>
<svg class="a" style="left:1239px;top:873px" width="18" height="18"><path d="M1 6 H4 L9 1.5 V16.5 L4 12 H1Z" fill="#31363b"/><path d="M11 5.5 Q13 9 11 12.5 M13.5 3.5 Q16.5 9 13.5 14.5" fill="none" stroke="#31363b" stroke-width="1.5"/></svg>
<svg class="a" style="left:1265px;top:873px" width="17" height="18"><rect x="1.5" y="3" width="13" height="14" fill="none" stroke="#31363b" stroke-width="1.4"/><rect x="4.5" y="1" width="7" height="3.5" fill="#31363b"/><path d="M4 8 H12 M4 10.5 H12 M4 13 H9" stroke="#31363b" stroke-width="1.1"/></svg>
<svg class="a" style="left:1293px;top:876px" width="14" height="10"><path d="M1 8.5 L7 2 L13 8.5Z" fill="#31363b"/></svg>
<div class="t" style="left:1315px;top:865px;font-size:32px;line-height:32px;color:#31363b;letter-spacing:2.2px;-webkit-text-stroke:0.4px #31363b">15:07</div>
<svg class="a" style="left:1416px;top:875px" width="14" height="14"><path d="M1 3 H13 M1 7 H13 M1 11 H13" stroke="#6b7076" stroke-width="1.6"/></svg>

</div></body></html>
